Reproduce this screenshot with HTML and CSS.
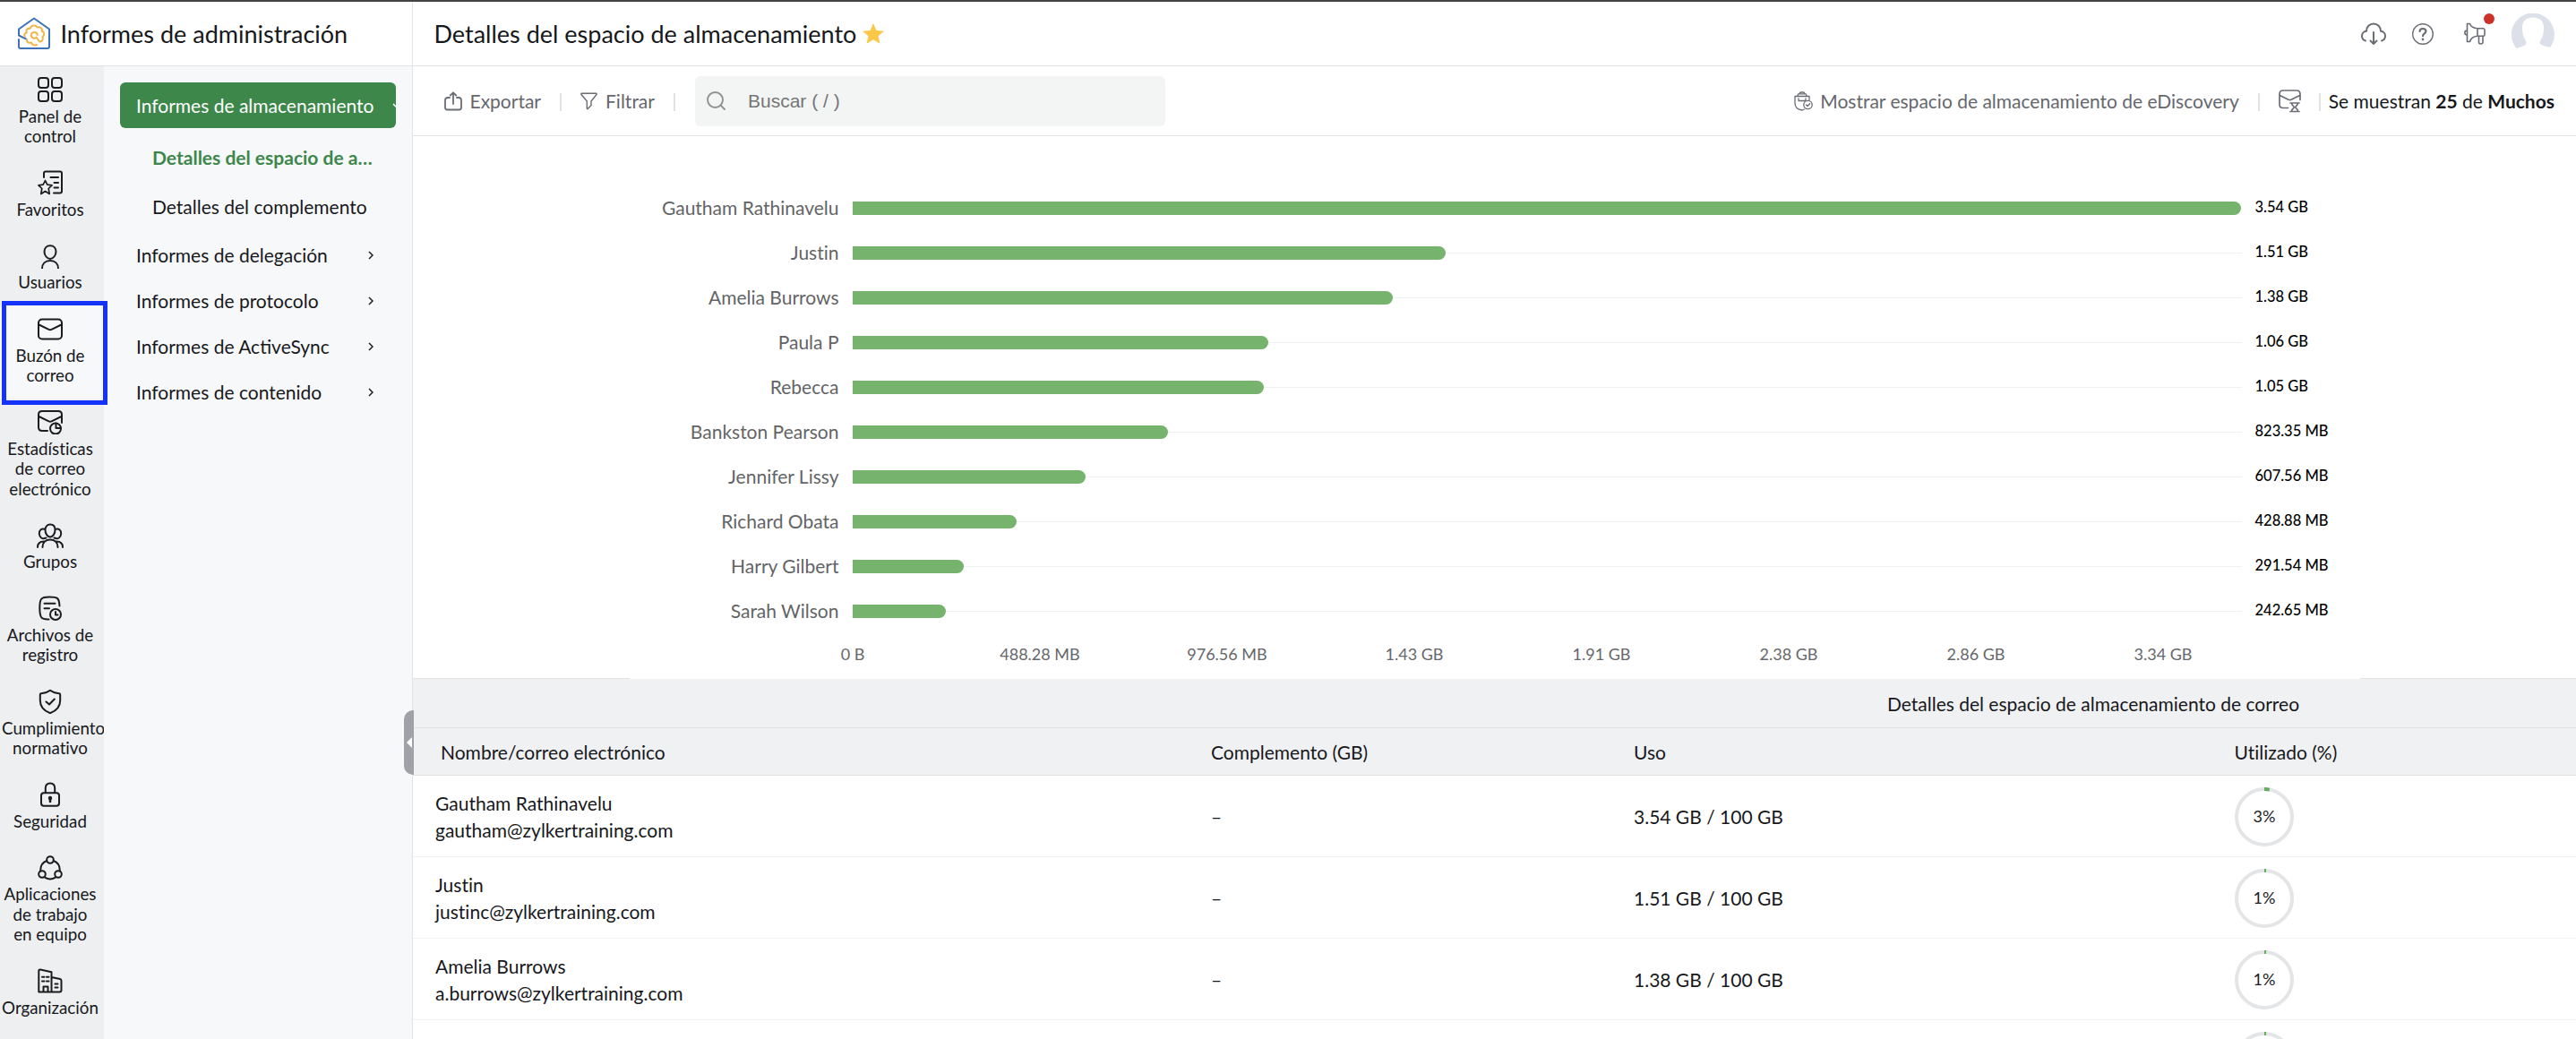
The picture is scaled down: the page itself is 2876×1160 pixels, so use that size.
FILE: index.html
```html
<!DOCTYPE html>
<html lang="es">
<head>
<meta charset="utf-8">
<title>Informes de administración</title>
<link rel="stylesheet" href="styles.css">
</head>
<body>
<div class="app">
  <header class="header">
    <div class="brand">
      <svg class="logo" viewBox="0 0 36 37" fill="none" stroke-linecap="round" stroke-linejoin="round">
        <path d="M9.300 24.600L1 20.500V13.500L18 1.500L35 13.500V33C35 34.300 34.300 35 33 35H3C1.700 35 1 34.300 1 33V25" stroke="#3d72b8" stroke-width="2"/>
        <path d="M21 31C18.500 32.200 16.300 31.400 15 28.500C12 29.500 9.700 28.200 10 25M7.800 22C6.500 20 7.500 18 9.800 17.500C8.500 14.500 10.500 12 13.800 12.800C14.500 9 20 8.500 21.500 11.500C25 10.500 27.500 12.500 26.800 15.500C30 17 30 20.500 27.500 22C28.800 25 27 27.800 24 27.500L20.500 22.500" stroke="#efb548" stroke-width="2"/>
        <path d="M21.800 20C21.600 17.800 19.800 16.800 18 17C14.500 17.500 13.800 21.500 16.500 23.200C17.800 24 19.200 23.800 20.200 23" stroke="#efb548" stroke-width="2"/>
      </svg>
      <span class="brand-name">Informes de administración</span>
    </div>
    <div class="page-head">
      <h1 class="page-title">Detalles del espacio de almacenamiento</h1>
      <svg class="star" viewBox="0 0 24 23"><path d="M12 0L15.400 7.900L24 8.700L17.500 14.300L19.400 22.700L12 18.200L4.600 22.700L6.500 14.300L0 8.700L8.600 7.900Z" fill="#f9c846"/></svg>
      <div class="head-actions">
        <svg class="act cloud" viewBox="0 0 28 26" fill="none" stroke="#6b6d75" stroke-width="2" stroke-linecap="round" stroke-linejoin="round"><path d="M5 20.500C2.300 19.600 1 17.600 1 15.200C1 12.200 3.300 10 6 9.800C6 4.800 9.600 1.500 14 1.500C18.400 1.500 22 4.800 22 9.800C24.700 10 27 12.200 27 15.200C27 17.600 25.700 19.600 23 20.500M14 11V24M10.500 20.500L14 24L17.500 20.500"/></svg>
        <svg class="act help" viewBox="0 0 24 24" fill="none" stroke="#6b6d75" stroke-linecap="round"><circle cx="12" cy="12" r="11.300" stroke-width="1.400"/><path d="M8.600 9C8.600 5 15.400 5 15.400 9C15.400 11.500 12 11.300 12 14.200" stroke-width="2.200"/><circle cx="12" cy="18" r=".6" stroke-width="1.600"/></svg>
        <div class="news">
          <svg class="act" viewBox="0 0 25 25" fill="none" stroke="#6b6d75" stroke-width="1.600" stroke-linejoin="round"><path d="M4.500 1.500H7.500C8.500 4.500 12 6.500 16 6.800V15.200C12 15.500 8.500 18 7.500 21.500H4.500ZM4.500 9C1 9 1 14 4.500 14M16 6.800H22.500Q24 6.800 24 8.500V13.500Q24 15.200 22.500 15.200H16ZM17.500 15.200V22Q17.500 24 19.500 24Q22 24 22 22V15.200"/></svg>
          <span class="dot"></span>
        </div>
        <svg class="avatar" viewBox="0 0 48 40"><path d="M5.500 39A24 24 0 1 1 43 38C39 37 35 36 32.500 34.500C31 33 31.500 31 33 29C35 26 36 21 36 16C36 8 31 4.500 24 4.500C17 4.500 12 8 12 16C12 21 13 26 15 29C16.500 31 17 33 15.500 35C13 37 9 37.500 5.500 39Z" fill="#dbe0e9"/></svg>
      </div>
    </div>
  </header>

  <div class="body">
    <nav class="rail">
      <a class="rail-item">
        <svg class="ri" viewBox="0 0 28 28"><rect x="1" y="1" width="11" height="11" rx="3"/><rect x="16" y="1" width="11" height="11" rx="3"/><rect x="1" y="16" width="11" height="11" rx="3"/><rect x="16" y="16" width="11" height="11" rx="3"/></svg>
        <span>Panel de<br>control</span>
      </a>
      <a class="rail-item">
        <svg class="ri" viewBox="0 0 28 28"><path d="M7 8V3.500Q7 1.500 9 1.500H25Q27 1.500 27 3.500V23.500Q27 25.500 25 25.500H18M14.500 8H23M18.500 14H23M18.500 19.500H23"/><path stroke-width="1.700" d="M8.500 11.500L10.800 16.200L16 16.900L12.200 20.500L13.200 26.500L8.500 23.500L3.800 26.500L4.800 20.500L1 16.900L6.200 16.200Z"/></svg>
        <span>Favoritos</span>
      </a>
      <a class="rail-item">
        <svg class="ri" viewBox="0 0 28 28"><path d="M14 2.200C18 2.200 20.500 5 20.500 9C20.500 13 17.500 17 14 17C10.500 17 7.500 13 7.500 9C7.500 5 10 2.200 14 2.200ZM5 28C5 22.500 8.500 19 14 19C19.500 19 23 22.500 23 28"/></svg>
        <span>Usuarios</span>
      </a>
      <a class="rail-item is-current">
        <svg class="ri" viewBox="0 0 28 28"><rect x="1" y="3.500" width="26" height="22" rx="4"/><path d="M1.500 9.500L12.500 14.800Q14 15.500 15.500 14.800L26.500 9.500"/></svg>
        <span>Buzón de<br>correo</span>
      </a>
      <a class="rail-item">
        <svg class="ri" viewBox="0 0 28 28"><path d="M11 24H5Q1 24 1 20V6Q1 2 5 2H23Q27 2 27 6V15M1.500 8L12.500 13.300Q14 14 15.500 13.300L26.500 8"/><circle cx="20" cy="21.500" r="6"/><path d="M20.500 15.500V21H26"/></svg>
        <span>Estadísticas<br>de correo<br>electrónico</span>
      </a>
      <a class="rail-item">
        <svg class="ri wide" viewBox="-1 0 30 28"><path d="M14 1.500C17.500 1.500 19.500 4 19.500 7.500C19.500 12 17 15.500 14 15.500C11 15.500 8.500 12 8.500 7.500C8.500 4 11 1.500 14 1.500ZM5.500 27C5.500 21.500 9 18.500 14 18.500C19 18.500 22.500 21.500 22.500 27M8.500 7C4 5.500 1.500 8 1.800 12C2.200 16 5 18.500 9.500 16.500M19.500 7C24 5.500 26.500 8 26.200 12C25.800 16 23 18.500 18.500 16.500M0 27C0 23 2.500 20.500 7 20.500M28 27C28 23 25.500 20.500 21 20.500"/></svg>
        <span>Grupos</span>
      </a>
      <a class="rail-item">
        <svg class="ri" viewBox="0 0 28 28"><path d="M12.500 26.500C4 26.800 2.500 25 2.300 14C2.300 3 4 1.500 13 1.500C22.500 1.500 24 2.500 24.500 11.500M7.500 8.800H19.500M7.500 14.300H13"/><circle cx="20" cy="21" r="6"/><path d="M20 18V21.500H22.500"/></svg>
        <span>Archivos de<br>registro</span>
      </a>
      <a class="rail-item">
        <svg class="ri" viewBox="0 0 28 28"><path d="M14 1.800C10.500 4.300 7.500 5.200 4 5.200Q2.800 5.200 2.800 6.500V13C2.800 20 7 24.500 14 27.200C21 24.500 25.200 20 25.200 13V6.500Q25.200 5.200 24 5.200C20.500 5.200 17.500 4.300 14 1.800ZM9.500 14.500L13 17.500L18.800 11.500"/></svg>
        <span>Cumplimiento<br>normativo</span>
      </a>
      <a class="rail-item">
        <svg class="ri" viewBox="0 0 28 28"><rect x="4" y="12.300" width="20" height="14.500" rx="3"/><path d="M8.800 12V7C8.800 3.500 11 1.500 14 1.500C17 1.500 19.200 3.500 19.200 7V12"/><path stroke-width="2.600" d="M14 18V22"/><circle cx="14" cy="18" r="1.200"/></svg>
        <span>Seguridad</span>
      </a>
      <a class="rail-item">
        <svg class="ri" viewBox="0 0 28 28"><circle cx="14" cy="5" r="3.800"/><circle cx="5" cy="21" r="3.800"/><circle cx="23" cy="21" r="3.800"/><path d="M10.300 6C5 8 3 12.500 3.300 17.200M17.700 6C23 8 25 12.500 24.700 17.200M8.500 24.800Q14 28 19.500 24.800"/></svg>
        <span>Aplicaciones<br>de trabajo<br>en equipo</span>
      </a>
      <a class="rail-item">
        <svg class="ri" viewBox="0 0 28 28"><path d="M1.300 26.500V3Q1.300 1.200 3 1.500L15.500 4.300V26.500ZM15.500 10L25 12Q26.500 12.300 26.500 14V24.500Q26.500 26.500 24.500 26.500H1.300M6.500 26V20.500H11.500V26M5 9.800H7.500M10 9.800H12.500M5 14.500H7.500M10 14.500H12.500M19.500 17.500H22.500M19.500 21.500H22.500"/></svg>
        <span>Organización</span>
      </a>
      <div class="focus-frame"></div>
    </nav>

    <aside class="menu">
      <a class="menu-item active">Informes de almacenamiento<svg class="chev down" viewBox="0 0 10 10"><path d="M1 3L5 7L9 3"/></svg></a>
      <div class="submenu">
        <a class="sub-item selected">Detalles del espacio de a…</a>
        <a class="sub-item">Detalles del complemento</a>
      </div>
      <a class="menu-item">Informes de delegación<svg class="chev" viewBox="0 0 6 10"><path d="M1 1L5 5L1 9"/></svg></a>
      <a class="menu-item">Informes de protocolo<svg class="chev" viewBox="0 0 6 10"><path d="M1 1L5 5L1 9"/></svg></a>
      <a class="menu-item">Informes de ActiveSync<svg class="chev" viewBox="0 0 6 10"><path d="M1 1L5 5L1 9"/></svg></a>
      <a class="menu-item">Informes de contenido<svg class="chev" viewBox="0 0 6 10"><path d="M1 1L5 5L1 9"/></svg></a>
      <div class="collapse"></div>
    </aside>

    <main class="main">
      <div class="toolbar">
        <svg class="ti export" viewBox="0 0 20 22"><path d="M6 7H4Q1 7 1 10V18Q1 20.500 3.500 20.500H16.500Q19 20.500 19 18V10Q19 7 16 7H14M10 14V1.500M6.800 4.500L10 1.300L13.200 4.500"/></svg>
        <span class="tool">Exportar</span>
        <i class="sep"></i>
        <svg class="ti filter" viewBox="0 0 19 20"><path d="M1.500 1.200H17.500Q18.500 1.500 18 2.500L12 10V14.500L8 18.700Q7.300 18.700 7.300 18V10L1 2.500Q.5 1.500 1.500 1.200Z"/></svg>
        <span class="tool">Filtrar</span>
        <i class="sep"></i>
        <div class="search">
          <svg class="ti glass" viewBox="0 0 21 21"><circle cx="9.500" cy="9.500" r="8.500"/><path d="M15.700 15.700L20 20"/></svg>
          <span>Buscar ( / )</span>
        </div>
        <div class="tools-right">
          <svg class="ti ediscovery" viewBox="0 0 21 22"><path d="M1 5.500H17V10M1 5.500V13C1 18 4.500 20.500 9 21L11.500 20M3.500 5.500L4.800 2.800H13L14.500 5.500M6 2.800Q6.300 1 8 1H10Q11.500 1 12 2.800M5 8V10.500H13V8"/><circle cx="15.500" cy="15" r="4.700"/><path d="M13.500 15L15 16.500L17.600 13.700"/></svg>
          <span class="tool">Mostrar espacio de almacenamiento de eDiscovery</span>
          <i class="sep"></i>
          <svg class="ti queue" viewBox="0 0 26 26"><path d="M10.500 20.500H5Q1 20.500 1 16.500V5Q1 1 5 1H20Q24 1 24 5V11.500M1.300 6.500L11 11.300Q12.500 12 14 11.300L23.700 6.500M13 15H23M13 24.500H23M14.500 15C14.500 18 17.200 18 17.200 19.700C17.200 21.300 14.500 21.300 14.500 24.500M21.500 15C21.500 18 18.800 18 18.800 19.700C18.800 21.300 21.500 21.300 21.500 24.500"/></svg>
          <i class="sep last"></i>
          <span class="count">Se muestran <b>25</b> de <b>Muchos</b></span>
        </div>
      </div>

      <section class="chart-area">
        <div class="chart">
          <div class="bar-row"><span class="who">Gautham Rathinavelu</span><div class="track"><div class="bar" style="width:1550px"></div></div><span class="amount">3.54 GB</span></div>
          <div class="bar-row"><span class="who">Justin</span><div class="track"><div class="bar" style="width:662px"></div></div><span class="amount">1.51 GB</span></div>
          <div class="bar-row"><span class="who">Amelia Burrows</span><div class="track"><div class="bar" style="width:603px"></div></div><span class="amount">1.38 GB</span></div>
          <div class="bar-row"><span class="who">Paula P</span><div class="track"><div class="bar" style="width:464px"></div></div><span class="amount">1.06 GB</span></div>
          <div class="bar-row"><span class="who">Rebecca</span><div class="track"><div class="bar" style="width:459px"></div></div><span class="amount">1.05 GB</span></div>
          <div class="bar-row"><span class="who">Bankston Pearson</span><div class="track"><div class="bar" style="width:352px"></div></div><span class="amount">823.35 MB</span></div>
          <div class="bar-row"><span class="who">Jennifer Lissy</span><div class="track"><div class="bar" style="width:260px"></div></div><span class="amount">607.56 MB</span></div>
          <div class="bar-row"><span class="who">Richard Obata</span><div class="track"><div class="bar" style="width:183px"></div></div><span class="amount">428.88 MB</span></div>
          <div class="bar-row"><span class="who">Harry Gilbert</span><div class="track"><div class="bar" style="width:124px"></div></div><span class="amount">291.54 MB</span></div>
          <div class="bar-row"><span class="who">Sarah Wilson</span><div class="track"><div class="bar" style="width:104px"></div></div><span class="amount">242.65 MB</span></div>
          <div class="axis"><span>0 B</span><span>488.28 MB</span><span>976.56 MB</span><span>1.43 GB</span><span>1.91 GB</span><span>2.38 GB</span><span>2.86 GB</span><span>3.34 GB</span></div>
        </div>
      </section>

      <section class="table">
        <div class="tr group"><span></span><span></span><span class="group-name">Detalles del espacio de almacenamiento de correo</span></div>
        <div class="tr cols"><span>Nombre/correo electrónico</span><span>Complemento (GB)</span><span>Uso</span><span>Utilizado (%)</span></div>
        <div class="tr row"><span>Gautham Rathinavelu<br>gautham@zylkertraining.com</span><span>–</span><span>3.54 GB / 100 GB</span><span><svg class="ring" viewBox="0 0 66 66"><circle cx="33" cy="33" r="31"/><path d="M33 2A31 31 0 0 1 38.800 2.600"/><text x="33" y="39">3%</text></svg></span></div>
        <div class="tr row"><span>Justin<br>justinc@zylkertraining.com</span><span>–</span><span>1.51 GB / 100 GB</span><span><svg class="ring" viewBox="0 0 66 66"><circle cx="33" cy="33" r="31"/><path d="M33 2A31 31 0 0 1 35 2.060"/><text x="33" y="39">1%</text></svg></span></div>
        <div class="tr row"><span>Amelia Burrows<br>a.burrows@zylkertraining.com</span><span>–</span><span>1.38 GB / 100 GB</span><span><svg class="ring" viewBox="0 0 66 66"><circle cx="33" cy="33" r="31"/><path d="M33 2A31 31 0 0 1 35 2.060"/><text x="33" y="39">1%</text></svg></span></div>
        <div class="tr row"><span></span><span></span><span></span><span><svg class="ring" viewBox="0 0 66 66"><circle cx="33" cy="33" r="31"/><path d="M33 2A31 31 0 0 1 35 2.060"/></svg></span></div>
      </section>
    </main>
  </div>
</div>
</body>
</html>
```
FILE: styles.css
```css
* { box-sizing: border-box; }
body {
  margin: 0;
  background: #fff;
  color: #17181b;
  font: 400 21px/1.2 Lato, "Liberation Sans", sans-serif;
  font-variant-ligatures: none;
}
svg { flex: none; display: block; }
.app {
  width: 2876px;
  height: 1160px;
  overflow: hidden;
  display: flex;
  flex-direction: column;
  border-top: 2px solid #454345;
}

/* header */
.header { display: flex; flex: none; height: 72px; border-bottom: 1px solid #e3e3e4; }
.brand {
  width: 461px;
  padding-left: 20px;
  display: flex;
  align-items: center;
  border-right: 1px solid #e3e3e4;
}
.logo { width: 36px; height: 37px; }
.brand-name { margin: 1px 0 0 11.500px; font-size: 27px; }
.page-head { flex: 1; display: flex; align-items: center; padding: 0 24px 0 23.500px; }
.page-title { margin: 1px 0 0; font-size: 27px; font-weight: 400; }
.star { width: 24px; height: 23px; margin-left: 7px; }
.head-actions { margin-left: auto; display: flex; align-items: center; }
.act { width: 25px; height: 25px; }
.act.cloud { width: 28px; height: 26px; margin-right: 29px; }
.act.help { width: 24px; height: 24px; margin-right: 33px; }
.news { position: relative; margin-right: 29px; }
.dot {
  position: absolute;
  left: 23px;
  top: -10px;
  width: 12px;
  height: 12px;
  border-radius: 50%;
  background: #cd3228;
}
.avatar { width: 48px; height: 40px; margin-top: -6px; }

.body { flex: 1; display: flex; min-height: 0; }

/* icon rail */
.rail { position: relative; width: 116px; flex: none; padding-top: 0; background: #edeff1; }
.rail-item {
  display: flex;
  flex-direction: column;
  align-items: center;
  padding: 12.250px 2px 14.250px;
  width: 112px;
  font-size: 18.750px;
  line-height: 22.500px;
  text-align: center;
  white-space: nowrap;
}
.rail-item span { width: 108px; margin-top: 4.500px; display: block; }
.rail-item.is-current { width: 116px; padding-right: 6px; background: #f7f8fa; }
.ri {
  width: 28px;
  height: 28px;
  fill: none;
  stroke: #1b1c1f;
  stroke-width: 2;
  stroke-linecap: round;
  stroke-linejoin: round;
}
.ri.wide { width: 30px; }
.focus-frame {
  position: absolute;
  z-index: 2;
  left: 2px;
  top: 262px;
  width: 118px;
  height: 116px;
  border: 5px solid #1432fa;
}

/* report menu */
.menu {
  position: relative;
  width: 345px;
  flex: none;
  padding: 18px 18px 0;
  background: #f7f8fa;
  border-right: 1px solid #e3e3e4;
  font-variant-ligatures: normal;
}
.menu-item {
  display: flex;
  align-items: center;
  height: 51px;
  padding: 0 25px 0 18px;
  white-space: nowrap;
  overflow: hidden;
}
.menu-item.active { background: #3d874b; color: #fff; border-radius: 6px; padding-right: 0; }
.submenu { padding: 4.500px 0 2px; }
.sub-item {
  display: block;
  margin-left: 36px;
  height: 55px;
  line-height: 55px;
  white-space: nowrap;
}
.sub-item.selected { color: #3d874b; font-weight: 700; }
.chev {
  width: 6px;
  height: 10px;
  margin-left: auto;
  fill: none;
  stroke: #1b1c1f;
  stroke-width: 1.500;
}
.chev.down { width: 10px; margin-left: 21px; stroke: #fff; }
.collapse {
  position: absolute;
  right: -2px;
  top: 719px;
  width: 11px;
  height: 72px;
  border-radius: 10px 0 0 10px;
  background: #a1a2a8;
  z-index: 1;
}
.collapse::after {
  content: "";
  position: absolute;
  left: 3px;
  top: 30px;
  border: 6px solid transparent;
  border-left: 0;
  border-right: 6px solid #fff;
}

/* toolbar */
.main { flex: 1; min-width: 0; }
.toolbar {
  display: flex;
  align-items: center;
  height: 78px;
  padding: 0 24px 0 35px;
  border-bottom: 1px solid #e3e3e4;
}
.ti { fill: none; stroke: #6b6d75; stroke-width: 1.800; stroke-linecap: round; stroke-linejoin: round; }
.tool { color: #66676d; white-space: nowrap; }
.sep { width: 2px; height: 20px; background: #e2e2e3; flex: none; margin: 2px 21px 0; }
.export { width: 20px; height: 22px; margin-right: 8.500px; }
.filter { width: 19px; height: 20px; margin-right: 9px; stroke-width: 1.400; }
.search {
  width: 525px;
  height: 56px;
  display: flex;
  align-items: center;
  margin-left: 1px;
  padding-left: 13px;
  background: #f3f5f5;
  border-radius: 6px;
  color: #757575;
  font-family: "Liberation Sans", sans-serif;
}
.glass { width: 21px; height: 21px; margin-right: 25px; stroke: #8f9192; stroke-width: 1.900; }
.tools-right { margin-left: auto; display: flex; align-items: center; }
.ediscovery { width: 21px; height: 22px; margin-right: 8px; stroke-width: 1.300; }
.queue { width: 26px; height: 26px; stroke-width: 1.700; }
.tools-right .sep.last { margin: 2px 9px 0 19px; }
.count { white-space: nowrap; }

/* chart */
.chart-area { height: 606px; border-bottom: 1px solid #e3e3e4; }
.chart { width: 1932px; height: 606px; margin: 0 auto; padding-top: 55.500px; background: #fff; }
.bar-row { display: flex; align-items: center; height: 50px; }
.who { width: 234px; margin-top: -1px; text-align: right; color: #636466; }
.track {
  width: 1551px;
  height: 15px;
  margin: 0 15px;
  background: linear-gradient(#f0f1f2, #f0f1f2) 0 7px / 100% 1px no-repeat;
}
.bar { height: 15px; background: #76b36c; border-radius: 0 7.500px 7.500px 0; }
.amount { font-size: 16.500px; font-weight: 500; color: #000; margin-top: -1px; }
.axis {
  display: flex;
  margin-left: 145px;
  margin-top: 12.500px;
  font-size: 18px;
  color: #66676a;
}
.axis span { width: 209px; text-align: center; }

/* table */
.tr {
  display: grid;
  grid-template-columns: 866px 472px 670px 407px;
  align-items: center;
  border-bottom: 1px solid #f3f3f5;
}
.tr > span { padding-left: 25px; }
.tr.group { height: 55px; padding-top: 2px; background: #f0f1f3; border-color: #e1e2e4; }
.tr > .group-name { grid-column: 3 / 5; text-align: center; padding: 0 1px 0 0; }
.tr.cols { height: 53px; padding-top: 2px; background: #f0f1f3; border-color: #e1e2e4; }
.tr.cols > span:first-child { padding-left: 31px; }
.tr.row { height: 91px; padding-top: 1px; line-height: 29.400px; }
.tr > span:last-child:not(.group-name) { padding-left: 25.500px; }
.ring { width: 66px; height: 66px; fill: none; stroke-width: 4; }
.ring circle { stroke: #e3e5e7; }
.ring path { stroke: #65ad5c; }
.ring text { fill: #1b1c1f; font-size: 18px; text-anchor: middle; }
```
